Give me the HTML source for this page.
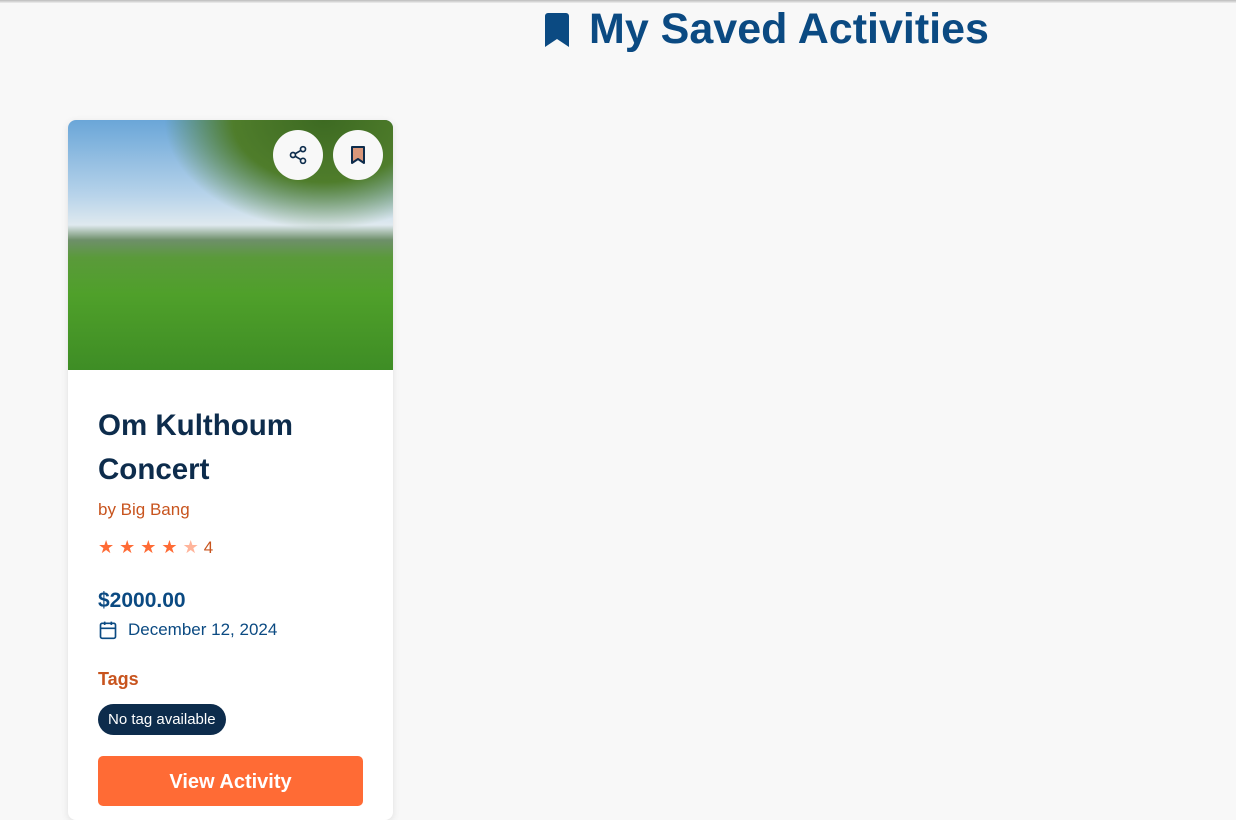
<!DOCTYPE html>
<html><head><style>
body{margin:0;width:1236px;height:792px;overflow:hidden;background:#f8f8f8;font-family:"Liberation Sans",sans-serif;position:relative}
.topbar{position:absolute;top:0;left:0;right:0;height:3px;background:linear-gradient(#bbb,#eee)}
h1{position:absolute;top:5px;left:543px;margin:0;font-size:43px;color:#0b4a82;font-weight:bold;display:flex;align-items:center}
.card{position:absolute;left:68px;top:120px;width:325px;height:700px;background:#fff;border-radius:8px;box-shadow:0 2px 8px rgba(0,0,0,.1);overflow:hidden}
.img{height:250px;background:linear-gradient(#6aa6d8 0%,#b7d3ea 30%,#dfe9ef 42%,#6e8f6a 48%,#5a9a3a 55%,#4fa02a 70%,#3e8d25 100%);position:relative}
.tree{position:absolute;right:0;top:0;width:230px;height:110px;background:radial-gradient(ellipse at 70% 0%,#3d6a22 0%,#4f7d2b 40%,rgba(80,120,40,0) 70%)}
.btn{position:absolute;top:10px;width:50px;height:50px;border-radius:50%;background:#f8f8f8;display:flex;align-items:center;justify-content:center}
.body{padding:34px 30px}
.t{font-size:29.5px;font-weight:bold;color:#0d2c4c;line-height:44px;margin-top:0}
.by{color:#c8541e;font-size:17px;margin-top:8px}
.stars{color:#ff6b35;font-size:18px;margin-top:17px}
.price{color:#0b4a82;font-weight:bold;font-size:21px;margin-top:31px}
.date{color:#0b4a82;font-size:17px;display:flex;align-items:center;gap:10px;margin-top:7px}
.tags{color:#c8541e;font-weight:bold;font-size:18px;margin-top:29px}
.pill{display:inline-block;background:#0d2c4c;color:#fff;font-size:15px;padding:7px 10px;border-radius:16px;margin-top:14px}
.view{background:#ff6b35;color:#fff;font-weight:bold;font-size:20px;text-align:center;border-radius:5px;margin-top:21px;height:50px;line-height:52px}
</style></head><body>
<div class="topbar"></div>
<h1><svg width="28" height="34" viewBox="0 0 28 34" style="margin-right:18px"><path d="M2 3a3 3 0 0 1 3-3h18a3 3 0 0 1 3 3v31l-12-8-12 8z" fill="#0b4a82"/></svg>My Saved Activities</h1>
<div class="card">
<div class="img"><div class="tree"></div>
<div class="btn" style="left:205px"><svg width="20" height="20" viewBox="0 0 24 24" fill="none" stroke="#0d2c4c" stroke-width="2"><circle cx="18" cy="5" r="3"/><circle cx="6" cy="12" r="3"/><circle cx="18" cy="19" r="3"/><path d="M8.6 13.5l6.8 4M15.4 6.5l-6.8 4"/></svg></div>
<div class="btn" style="left:265px"><svg width="18" height="20" viewBox="0 0 18 20"><path d="M3 2h12v16l-6-4-6 4z" fill="#d9977a" stroke="#0d2c4c" stroke-width="2" stroke-linejoin="round"/></svg></div>
</div>
<div class="body">
<div class="t">Om Kulthoum Concert</div>
<div class="by">by Big Bang</div>
<div class="stars">★ ★ ★ ★ <span style="color:#ffb49a">★</span> <span style="color:#c8541e;font-size:17px">4</span></div>
<div class="price">$2000.00</div>
<div class="date"><svg width="20" height="20" viewBox="0 0 24 24" fill="none" stroke="#0b4a82" stroke-width="2"><rect x="3" y="4" width="18" height="18" rx="2"/><path d="M16 2v4M8 2v4M3 10h18"/></svg>December 12, 2024</div>
<div class="tags">Tags</div>
<div class="pill">No tag available</div>
<div class="view">View Activity</div>
</div></div>
</body></html>
